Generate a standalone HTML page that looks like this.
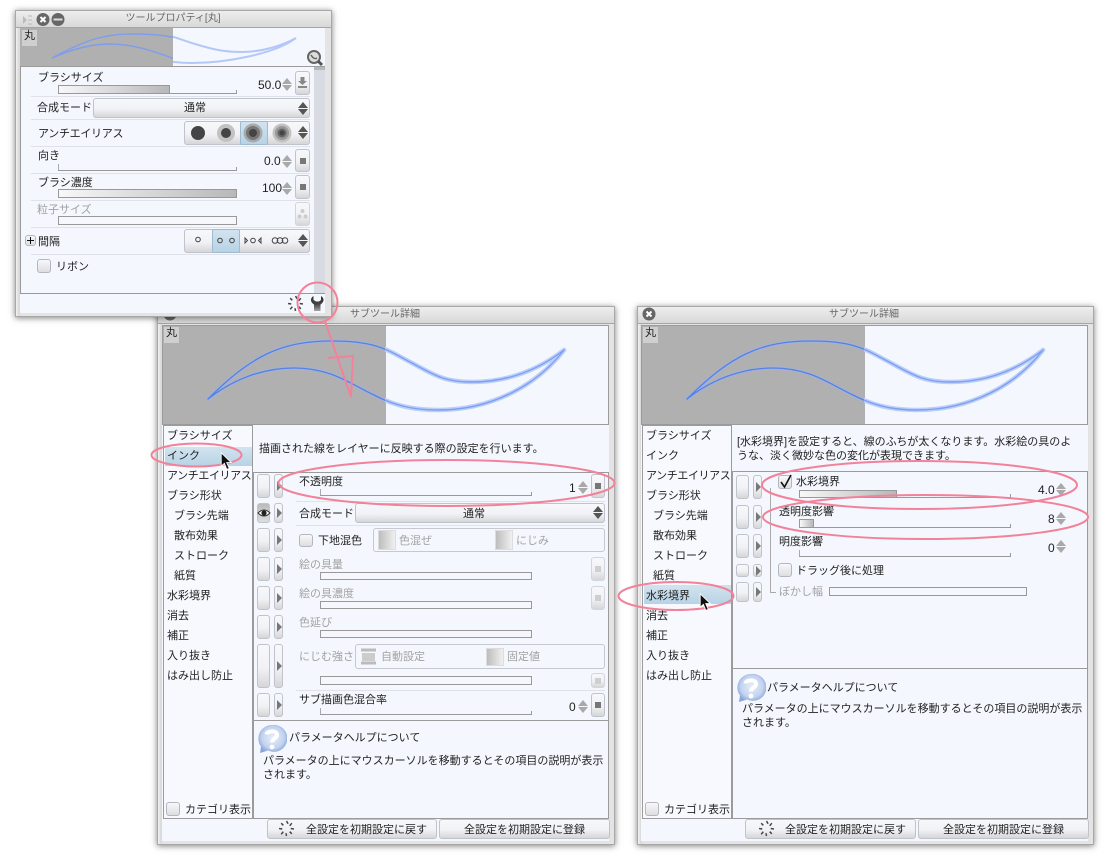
<!DOCTYPE html>
<html lang="ja"><head><meta charset="utf-8"><title>サブツール詳細</title>
<style>
html,body{margin:0;padding:0;background:#fff;}
body{position:relative;width:1109px;height:864px;overflow:hidden;font-family:"Liberation Sans","Noto Sans CJK JP",sans-serif;font-size:11px;color:#222;}
div,span,svg{position:absolute;box-sizing:border-box;}
.win{background:linear-gradient(90deg,#f3f3f3,#d8d8d8 3px,#e4e4e4 5px);border:1px solid #a8a8a8;box-shadow:0 1px 6px rgba(0,0,0,.5);}
.tb{background:linear-gradient(#eee,#d8d8d8);border-bottom:1px solid #a5a5a5;}
.tt{color:#666;text-align:center;line-height:14px;white-space:nowrap;font-size:10px;margin-top:1px;}
.p{background:#f4f7fd;}
.bd{border:1px solid #9b9b9b;}
.ln{background:#dfe2e8;height:1px;}
.ld{background:#999;}
.t{white-space:nowrap;line-height:14px;height:14px;margin-top:1px;}
.n{font-size:12px;}
.lb{background:#cfcfcf;text-align:center;line-height:13px;margin-top:0;width:15px;height:16px;}
.g{color:#a2a2a2;}
.b{background:linear-gradient(#f7f8fb,#f1f2f5 55%,#d6d6d8);border:1px solid #bfc3cb;border-radius:3px;}
.a::after{content:"";position:absolute;left:2px;top:50%;margin-top:-5px;border-left:5px solid #777;border-top:5px solid transparent;border-bottom:5px solid transparent;}
.s::after{content:"";position:absolute;left:50%;top:50%;margin:-3px 0 0 -3px;width:6px;height:6px;background:#777;}
.sd{border-color:#d2d5db;}
.sd::after{background:#cfcfcf;}
.ck{background:linear-gradient(#f8f8fa,#dedee0);border:1px solid #b4b7bd;border-radius:3px;}
.sl{border:1px solid #999;background:#f5f7fc;}
.fl{left:0;top:0;bottom:0;background:linear-gradient(90deg,#f8f8f8,#b8b8b8);}
.tk{border-bottom:1px solid #999;height:7px;}
.tk::before{content:"";position:absolute;left:0;top:0;bottom:0;width:1px;background:#aaa;}
.tk::after{content:"";position:absolute;right:0;bottom:0;height:3px;width:1px;background:#999;}
.sp{width:10px;height:13px;}
.sp::before{content:"";position:absolute;left:0;top:0;border-bottom:6px solid #a9a9a9;border-left:5px solid transparent;border-right:5px solid transparent;}
.sp::after{content:"";position:absolute;left:0;bottom:0;border-top:6px solid #a9a9a9;border-left:5px solid transparent;border-right:5px solid transparent;}
.dk::before{border-bottom-color:#555;}
.dk::after{border-top-color:#555;}
.sel{background:linear-gradient(#d2e3ef,#b7d3e6);}
.ic{background:linear-gradient(90deg,#bdbdbd,#f0f0f0);border:1px solid #ddd;}
.pk{fill:none;stroke:#f2829a;stroke-width:2;}
</style></head><body>
<svg width="0" height="0" style="left:0;top:0"><defs>
<clipPath id="cl"><rect x="0" y="0" width="223" height="99"/></clipPath>
<clipPath id="cr2"><rect x="223" y="0" width="224" height="99"/></clipPath>
<path id="u" d="M46 74C90 30 120 16 170 16C215 16 225 25 250 38C275 52 285 57 310 57C350 57 380 42 402 25"/>
<path id="l" d="M46 74C70 55 100 43 132 43C170 43 190 60 212 70C235 82 255 85 276 85C330 85 375 60 402 25"/>
<symbol id="br" viewBox="0 0 447 99" overflow="visible">
<g fill="none" stroke-linecap="round" clip-path="url(#cl)"><use href="#u" stroke="#9db4ea" stroke-opacity=".6" stroke-width="3.5"/><use href="#l" stroke="#9db4ea" stroke-opacity=".6" stroke-width="3.5"/><use href="#u" stroke="#5580e6" stroke-width="1.3"/><use href="#l" stroke="#5580e6" stroke-width="1.3"/></g>
<g fill="none" stroke-linecap="round" clip-path="url(#cr2)"><use href="#u" stroke="#bccffa" stroke-width="4.5"/><use href="#l" stroke="#bccffa" stroke-width="4.5"/><use href="#u" stroke="#7c9ff2" stroke-width="1.4"/><use href="#l" stroke="#7c9ff2" stroke-width="1.4"/></g></symbol>
<symbol id="hp" viewBox="0 0 30 30"><defs><radialGradient id="hg" cx=".5" cy=".45" r=".55"><stop offset="0" stop-color="#e6eefb"/><stop offset=".7" stop-color="#c3d3ef"/><stop offset="1" stop-color="#89a6d8"/></radialGradient></defs><path fill="url(#hg)" d="M15 1A13.5 13.5 0 0 0 4 22.5L3 29L11 26.5A13.5 13.5 0 1 0 15 1Z"/><path fill="none" stroke="#fff" stroke-width="4" d="M9.5 10.5C10 6.5 20 6 20 11C20 14.5 15 14.5 15 18.5"/><circle cx="15" cy="23" r="2.4" fill="#fff"/></symbol>
<symbol id="rs" viewBox="0 0 16 16"><g fill="none" stroke="#444" stroke-width="1.4"><path d="M8 1L9.5 3.500M13 3L11 5.500M15 8.500L12 8M13 13L11 11M8 15L7.500 12.500M3 13.500L5 11M1 8L4 8.500M3 3L5 5"/></g></symbol>
<symbol id="cr" viewBox="0 0 12 18"><path fill="#111" stroke="#fff" stroke-width=".8" d="M1 0.8L1 13.5L4 10.8L6.3 16.5L8.6 15.5L6.2 10L10.5 10Z"/></symbol>
<linearGradient id="wg" x1="0" y1="0" x2="0" y2="1"><stop offset="0" stop-color="#333"/><stop offset=".55" stop-color="#444"/><stop offset="1" stop-color="#a5a5a5"/></linearGradient>
</defs></svg>

<!-- WINDOW 3 -->
<div class="win" style="left:637px;top:306px;width:457px;height:539px"></div>
<div class="tb" style="left:638px;top:307px;width:455px;height:17px"></div>
<svg style="left:642px;top:307px" width="14" height="14"><circle cx="7" cy="7" r="6.5" fill="#666"/><path d="M4.5 4.5L9.5 9.5M9.5 4.5L4.5 9.5" stroke="#fff" stroke-width="2"/></svg>
<div class="tt" style="left:638px;top:307px;width:452px">サブツール詳細</div>
<div class="p" style="left:641px;top:325px;width:447px;height:516px"></div>
<div class="bd" style="left:641px;top:325px;width:447px;height:100px;background:linear-gradient(90deg,#b0b0b0 223px,#f4f7fd 223px)"></div>
<svg style="left:641px;top:325px" width="447" height="99"><use href="#br" width="447" height="99"/></svg>
<div class="t lb" style="left:643px;top:327px">丸</div>
<div style="left:642px;top:425px;width:90px;height:394px;background:#f7f9fe;border:1px solid #9b9b9b"></div>
<div class="sel" style="left:644px;top:585px;width:87px;height:19px"></div>
<div class="t" style="left:646px;top:428px">ブラシサイズ</div>
<div class="t" style="left:646px;top:448px">インク</div>
<div class="t" style="left:646px;top:468px;letter-spacing:-.4px">アンチエイリアス</div>
<div class="t" style="left:646px;top:488px">ブラシ形状</div>
<div class="t" style="left:653px;top:508px">ブラシ先端</div>
<div class="t" style="left:653px;top:528px">散布効果</div>
<div class="t" style="left:653px;top:548px">ストローク</div>
<div class="t" style="left:653px;top:568px">紙質</div>
<div class="t" style="left:646px;top:588px">水彩境界</div>
<div class="t" style="left:646px;top:608px">消去</div>
<div class="t" style="left:646px;top:628px">補正</div>
<div class="t" style="left:646px;top:648px">入り抜き</div>
<div class="t" style="left:646px;top:668px">はみ出し防止</div>
<div class="ck" style="left:645px;top:802px;width:14px;height:14px"></div>
<div class="t" style="left:664px;top:802px">カテゴリ表示</div>
<div class="t" style="left:737px;top:434px">[水彩境界]を設定すると、線のふちが太くなります。水彩絵の具のよ</div>
<div class="t" style="left:737px;top:448px">うな、淡く微妙な色の変化が表現できます。</div>
<div class="bd" style="left:732px;top:471px;width:356px;height:198px"></div>
<div class="bd" style="left:732px;top:668px;width:356px;height:151px"></div>
<div class="b" style="left:736px;top:475px;width:13px;height:24px"></div><div class="b a" style="left:753px;top:475px;width:9px;height:24px"></div>
<div class="b" style="left:736px;top:505px;width:13px;height:24px"></div><div class="b a" style="left:753px;top:505px;width:9px;height:24px"></div>
<div class="b" style="left:736px;top:534px;width:13px;height:24px"></div><div class="b a" style="left:753px;top:534px;width:9px;height:24px"></div>
<div class="b" style="left:736px;top:564px;width:13px;height:13px"></div><div class="b a" style="left:753px;top:564px;width:9px;height:13px"></div>
<div class="b" style="left:736px;top:582px;width:13px;height:20px"></div><div class="b a" style="left:753px;top:582px;width:9px;height:20px"></div>
<div class="ld" style="left:770px;top:488px;width:1px;height:104px;background:#aaa"></div>
<div style="left:770px;top:592px;width:6px;height:1px;background:#aaa"></div>
<div class="ck" style="left:778px;top:475px;width:14px;height:14px"></div>
<svg style="left:779px;top:473px" width="14" height="16"><path d="M2 9L5.500 14L12 2" fill="none" stroke="#111" stroke-width="1.6"/></svg>
<div class="t" style="left:796px;top:474px">水彩境界</div>
<div class="tk" style="left:799px;top:491px;width:212px"></div>
<div class="sl" style="left:799px;top:490px;width:98px;height:8px;border-bottom-color:#999"><div class="fl" style="width:100%"></div></div>
<div class="t n" style="left:1038px;top:482px">4.0</div><div class="sp" style="left:1056px;top:483px"></div>
<div class="t" style="left:779px;top:504px">透明度影響</div>
<div class="tk" style="left:799px;top:521px;width:212px"></div>
<div class="sl" style="left:799px;top:519px;width:15px;height:9px"><div class="fl" style="width:100%"></div></div>
<div class="t n" style="left:1048px;top:511px">8</div><div class="sp" style="left:1056px;top:512px"></div>
<div class="t" style="left:779px;top:534px">明度影響</div>
<div class="tk" style="left:799px;top:550px;width:212px"></div>
<div class="t n" style="left:1048px;top:540px">0</div><div class="sp" style="left:1056px;top:540px"></div>
<div class="ck" style="left:778px;top:563px;width:14px;height:14px"></div>
<div class="t" style="left:796px;top:563px">ドラッグ後に処理</div>
<div class="t g" style="left:779px;top:584px">ぼかし幅</div>
<div class="sl" style="left:829px;top:587px;width:198px;height:9px"></div>
<svg style="left:736px;top:673px" width="30" height="30"><use href="#hp" width="30" height="30"/></svg>
<div class="t" style="left:767px;top:680px">パラメータヘルプについて</div>
<div class="t" style="left:742px;top:701px">パラメータの上にマウスカーソルを移動するとその項目の説明が表示</div>
<div class="t" style="left:742px;top:715px">されます。</div>
<div class="b" style="left:745px;top:819px;width:171px;height:20px"></div>
<svg style="left:758px;top:820px" width="17" height="17"><use href="#rs" width="17" height="17"/></svg>
<div class="t" style="left:785px;top:822px">全設定を初期設定に戻す</div>
<div class="b" style="left:918px;top:819px;width:171px;height:20px"></div>
<div class="t" style="left:943px;top:822px">全設定を初期設定に登録</div>

<!-- WINDOW 2 -->
<div class="win" style="left:157px;top:306px;width:458px;height:539px"></div>
<div class="tb" style="left:158px;top:307px;width:456px;height:17px"></div>
<svg style="left:163px;top:307px" width="14" height="14"><circle cx="7" cy="7" r="6.5" fill="#666"/></svg>
<div class="tt" style="left:158px;top:307px;width:454px">サブツール詳細</div>
<div class="p" style="left:162px;top:325px;width:447px;height:516px"></div>
<div class="bd" style="left:162px;top:325px;width:447px;height:100px;background:linear-gradient(90deg,#b0b0b0 223px,#f4f7fd 223px)"></div>
<svg style="left:162px;top:325px" width="447" height="99"><use href="#br" width="447" height="99"/></svg>
<div class="t lb" style="left:164px;top:327px">丸</div>
<div style="left:163px;top:425px;width:90px;height:394px;background:#f7f9fe;border:1px solid #9b9b9b"></div>
<div class="sel" style="left:165px;top:447px;width:87px;height:19px"></div>
<div class="t" style="left:167px;top:428px">ブラシサイズ</div>
<div class="t" style="left:167px;top:448px">インク</div>
<div class="t" style="left:167px;top:468px;letter-spacing:-.4px">アンチエイリアス</div>
<div class="t" style="left:167px;top:488px">ブラシ形状</div>
<div class="t" style="left:174px;top:508px">ブラシ先端</div>
<div class="t" style="left:174px;top:528px">散布効果</div>
<div class="t" style="left:174px;top:548px">ストローク</div>
<div class="t" style="left:174px;top:568px">紙質</div>
<div class="t" style="left:167px;top:588px">水彩境界</div>
<div class="t" style="left:167px;top:608px">消去</div>
<div class="t" style="left:167px;top:628px">補正</div>
<div class="t" style="left:167px;top:648px">入り抜き</div>
<div class="t" style="left:167px;top:668px">はみ出し防止</div>
<div class="ck" style="left:166px;top:802px;width:14px;height:14px"></div>
<div class="t" style="left:185px;top:802px">カテゴリ表示</div>
<div class="t" style="left:259px;top:441px">描画された線をレイヤーに反映する際の設定を行います。</div>
<div class="bd" style="left:253px;top:472px;width:356px;height:249px"></div>
<div class="bd" style="left:253px;top:720px;width:356px;height:99px"></div>
<div class="b" style="left:257px;top:474px;width:13px;height:24px"></div><div class="b a" style="left:274px;top:474px;width:9px;height:24px"></div>
<div class="t" style="left:299px;top:474px">不透明度</div>
<div class="tk" style="left:320px;top:489px;width:212px"></div>
<div class="t n" style="left:569px;top:480px">1</div><div class="sp" style="left:578px;top:481px"></div>
<div class="b s" style="left:591px;top:474px;width:14px;height:24px"></div>
<div class="ln" style="left:296px;top:501px;width:309px"></div>
<div class="b" style="left:257px;top:503px;width:13px;height:20px;background:linear-gradient(#bbb,#ddd)"></div><div class="b a" style="left:274px;top:503px;width:9px;height:20px"></div>
<svg style="left:257px;top:507px" width="14" height="12"><path d="M1 6Q7 0 13 6Q7 12 1 6Z" fill="#fff" stroke="#333"/><circle cx="7" cy="6" r="2.6" fill="#222"/></svg>
<div class="t" style="left:299px;top:506px">合成モード</div>
<div class="b" style="left:355px;top:503px;width:250px;height:20px"></div>
<div class="t" style="left:463px;top:506px">通常</div><div class="sp dk" style="left:593px;top:506px"></div>
<div class="ln" style="left:296px;top:525px;width:309px"></div>
<div class="b" style="left:257px;top:528px;width:13px;height:24px"></div><div class="b a" style="left:274px;top:528px;width:9px;height:24px"></div>
<div class="ck" style="left:299px;top:534px;width:14px;height:13px"></div>
<div class="t" style="left:318px;top:533px">下地混色</div>
<div class="bd" style="left:373px;top:528px;width:232px;height:24px;border-radius:3px;border-color:#c5c8ce"></div>
<div class="ic" style="left:378px;top:530px;width:18px;height:20px"></div><div class="t g" style="left:399px;top:533px">色混ぜ</div>
<div class="ic" style="left:495px;top:530px;width:18px;height:20px"></div><div class="t g" style="left:516px;top:533px">にじみ</div>
<div class="b" style="left:257px;top:557px;width:13px;height:24px"></div><div class="b a" style="left:274px;top:557px;width:9px;height:24px"></div>
<div class="t g" style="left:299px;top:557px">絵の具量</div>
<div class="sl" style="left:320px;top:572px;width:212px;height:8px"></div>
<div class="b s sd" style="left:591px;top:557px;width:14px;height:24px"></div>
<div class="b" style="left:257px;top:586px;width:13px;height:24px"></div><div class="b a" style="left:274px;top:586px;width:9px;height:24px"></div>
<div class="t g" style="left:299px;top:586px">絵の具濃度</div>
<div class="sl" style="left:320px;top:601px;width:212px;height:8px"></div>
<div class="b s sd" style="left:591px;top:586px;width:14px;height:24px"></div>
<div class="b" style="left:257px;top:615px;width:13px;height:24px"></div><div class="b a" style="left:274px;top:615px;width:9px;height:24px"></div>
<div class="t g" style="left:299px;top:615px">色延び</div>
<div class="sl" style="left:320px;top:630px;width:212px;height:8px"></div>
<div class="b" style="left:257px;top:644px;width:13px;height:44px"></div><div class="b a" style="left:274px;top:644px;width:9px;height:44px"></div>
<div class="t g" style="left:299px;top:649px">にじむ強さ</div>
<div class="bd" style="left:355px;top:644px;width:250px;height:25px;border-radius:3px;border-color:#c5c8ce"></div>
<svg style="left:360px;top:646px" width="17" height="20"><path d="M1 4H16M1 17H16" stroke="#bbb" stroke-width="3"/><rect x="2" y="7" width="13" height="8" fill="#ccc"/></svg>
<div class="t g" style="left:381px;top:649px">自動設定</div>
<div class="ic" style="left:486px;top:648px;width:18px;height:18px"></div><div class="t g" style="left:507px;top:649px">固定値</div>
<div class="sl" style="left:320px;top:676px;width:212px;height:9px"></div>
<div class="b s sd" style="left:591px;top:673px;width:14px;height:15px"></div>
<div class="ln" style="left:296px;top:690px;width:309px"></div>
<div class="b" style="left:257px;top:693px;width:13px;height:24px"></div><div class="b a" style="left:274px;top:693px;width:9px;height:24px"></div>
<div class="t" style="left:299px;top:692px">サブ描画色混合率</div>
<div class="tk" style="left:320px;top:708px;width:212px"></div>
<div class="t n" style="left:569px;top:699px">0</div><div class="sp" style="left:578px;top:700px"></div>
<div class="b s" style="left:591px;top:693px;width:14px;height:24px"></div>
<svg style="left:257px;top:724px" width="30" height="30"><use href="#hp" width="30" height="30"/></svg>
<div class="t" style="left:289px;top:730px">パラメータヘルプについて</div>
<div class="t" style="left:263px;top:753px">パラメータの上にマウスカーソルを移動するとその項目の説明が表示</div>
<div class="t" style="left:263px;top:767px">されます。</div>
<div class="b" style="left:267px;top:819px;width:170px;height:20px"></div>
<svg style="left:278px;top:820px" width="17" height="17"><use href="#rs" width="17" height="17"/></svg>
<div class="t" style="left:306px;top:822px">全設定を初期設定に戻す</div>
<div class="b" style="left:439px;top:819px;width:171px;height:20px"></div>
<div class="t" style="left:464px;top:822px">全設定を初期設定に登録</div>

<!-- WINDOW 1 -->
<div class="win" style="left:15px;top:10px;width:317px;height:307px"></div>
<div class="tb" style="left:16px;top:11px;width:315px;height:17px"></div>
<svg style="left:22px;top:13px" width="44" height="14"><path d="M1 3L5 7L1 11Z" fill="#bbb"/><path d="M6 3H10M6 7H10M6 11H10" stroke="#bbb"/><circle cx="21" cy="6.500" r="6.500" fill="#666"/><path d="M18.500 4L23.500 9M23.500 4L18.500 9" stroke="#fff" stroke-width="2"/><circle cx="36" cy="6.500" r="6.500" fill="#666"/><path d="M31.500 6.500H40.500" stroke="#ddd" stroke-width="2"/></svg>
<div class="tt" style="left:16px;top:11px;width:314px">ツールプロパティ[丸]</div>
<div class="p" style="left:20px;top:28px;width:305px;height:285px"></div>
<div class="bd" style="left:20px;top:28px;width:305px;height:39px;border-width:0 0 1px;background:linear-gradient(90deg,#b0b0b0 153px,#f4f7fd 153px)"></div>
<svg style="left:20px;top:28px" width="153" height="39"><g fill="none" stroke-width="1.400" stroke="#7f9deb"><path d="M32 30C65 12 85 6 110 6C140 6 155 8 175 16"/><path d="M32 30C50 22 70 16 90 16C115 16 135 24 155 31"/></g></svg>
<svg style="left:173px;top:28px" width="152" height="39"><g fill="none" stroke-width="2" stroke="#b4c8f8"><path d="M-3 8C5 10 15 14 22 16C42 22 52 24 69 24C92 24 112 16 123 10"/><path d="M-18 31C-3 34 7 35 19 35C52 35 102 26 123 10"/></g></svg>
<div class="t lb" style="left:22px;top:30px">丸</div>
<svg style="left:306px;top:49px" width="18" height="18"><circle cx="8" cy="8" r="6" fill="#ddd" stroke="#666" stroke-width="2"/><path d="M12 12L16 16" stroke="#555" stroke-width="3"/><path d="M5 6Q8 11 11 9" stroke="#666" stroke-width="1.500" fill="none"/></svg>
<div style="left:20px;top:67px;width:1px;height:227px;background:#999"></div>
<div style="left:20px;top:293px;width:305px;height:1px;background:#999"></div>
<div style="left:314px;top:67px;width:11px;height:226px;background:#d8dbe2"></div>
<div style="left:314px;top:67px;width:11px;height:3px;background:#b5b7bc"></div>
<div class="t" style="left:38px;top:70px">ブラシサイズ</div>
<div class="tk" style="left:58px;top:87px;width:179px"></div>
<div class="sl" style="left:58px;top:85px;width:112px;height:9px"><div class="fl" style="width:100%"></div></div>
<div class="t n" style="left:258px;top:77px">50.0</div><div class="sp" style="left:282px;top:78px"></div>
<div class="b" style="left:295px;top:71px;width:15px;height:24px"></div>
<svg style="left:297px;top:77px" width="11" height="13"><path d="M3.500 0H7.500V4H10L5.500 8L1 4H3.500Z" fill="#888"/><path d="M1 10H10" stroke="#888" stroke-width="2"/></svg>
<div class="ln" style="left:31px;top:96px;width:279px"></div>
<div class="t" style="left:37px;top:100px">合成モード</div>
<div class="b" style="left:93px;top:98px;width:217px;height:20px"></div>
<div class="t" style="left:184px;top:100px">通常</div><div class="sp dk" style="left:298px;top:102px;"></div>
<div class="ln" style="left:31px;top:119px;width:279px"></div>
<div class="t" style="left:38px;top:126px;letter-spacing:-.3px">アンチエイリアス</div>
<div class="b" style="left:184px;top:121px;width:126px;height:24px"></div>
<div class="sel" style="left:240px;top:121px;width:28px;height:24px;border:1px solid #9fbccf;border-radius:2px"></div>
<svg style="left:184px;top:121px" width="112" height="24"><circle cx="14" cy="12" r="7" fill="#444"/><circle cx="42" cy="12" r="9" fill="#c2c2c2"/><circle cx="42" cy="12" r="5" fill="#444"/><circle cx="69" cy="12" r="9.500" fill="#a9a9a9"/><circle cx="69" cy="12" r="7" fill="#777"/><circle cx="69" cy="12" r="4" fill="#444"/><circle cx="98" cy="12" r="9.500" fill="#c2c2c2"/><circle cx="98" cy="12" r="7" fill="#999"/><circle cx="98" cy="12" r="4.500" fill="#666"/><circle cx="98" cy="12" r="2.500" fill="#444"/></svg>
<div class="sp dk" style="left:298px;top:126px"></div>
<div class="ln" style="left:31px;top:146px;width:279px"></div>
<div class="t" style="left:38px;top:148px">向き</div>
<div class="tk" style="left:58px;top:164px;width:179px"></div>
<div class="t n" style="left:264px;top:153px">0.0</div><div class="sp" style="left:282px;top:155px"></div>
<div class="b s" style="left:295px;top:149px;width:15px;height:23px"></div>
<div class="ln" style="left:31px;top:173px;width:279px"></div>
<div class="t" style="left:38px;top:175px">ブラシ濃度</div>
<div class="sl" style="left:58px;top:189px;width:179px;height:9px"><div class="fl" style="width:100%"></div></div>
<div class="t n" style="left:262px;top:180px">100</div><div class="sp" style="left:282px;top:182px"></div>
<div class="b s" style="left:295px;top:175px;width:15px;height:24px"></div>
<div class="ln" style="left:31px;top:200px;width:279px"></div>
<div class="t g" style="left:37px;top:202px">粒子サイズ</div>
<div class="sl" style="left:58px;top:216px;width:179px;height:9px"></div>
<div class="b sd" style="left:295px;top:202px;width:15px;height:24px"></div>
<svg style="left:297px;top:208px" width="11" height="12"><circle cx="5.500" cy="3" r="2" fill="#ccc"/><circle cx="2.500" cy="8.500" r="2" fill="#ccc"/><circle cx="8.500" cy="8.500" r="2" fill="#ccc"/></svg>
<div class="ln" style="left:31px;top:227px;width:279px"></div>
<div class="ck" style="left:25px;top:235px;width:11px;height:11px"></div>
<svg style="left:25px;top:235px" width="11" height="11"><path d="M2 5.500H9M5.500 2V9" stroke="#111"/></svg>
<div class="t" style="left:38px;top:234px">間隔</div>
<div class="b" style="left:184px;top:229px;width:126px;height:24px"></div>
<div class="sel" style="left:212px;top:229px;width:28px;height:24px;border:1px solid #9fbccf;border-radius:2px"></div>
<svg style="left:184px;top:229px" width="112" height="24" fill="none" stroke="#444"><circle cx="14" cy="10.500" r="2.300"/><circle cx="36" cy="11.500" r="2.300"/><circle cx="48" cy="11.500" r="2.300"/><path d="M61 9V14L63.500 11.500Z"/><circle cx="69" cy="11.500" r="2.300"/><path d="M77 9V14L74.500 11.500Z"/><circle cx="91" cy="11.500" r="2.800"/><circle cx="96" cy="11.500" r="2.800"/><circle cx="101" cy="11.500" r="2.800"/></svg>
<div class="sp dk" style="left:298px;top:234px"></div>
<div class="ln" style="left:31px;top:254px;width:279px"></div>
<div class="ck" style="left:37px;top:259px;width:14px;height:14px"></div>
<div class="t" style="left:56px;top:259px">リボン</div>
<svg style="left:287px;top:295px" width="17" height="17"><use href="#rs" width="17" height="17"/></svg>
<svg style="left:309px;top:295px" width="17" height="17"><path d="M4.500 1C1 3 1 7 5 9.500V16H11.500V9.500C15.500 7 15.500 3 12 1V5L10 6.500H7L4.500 5Z" fill="url(#wg)"/></svg>

<!-- ANNOTATIONS -->
<svg style="left:0;top:0" width="1109" height="864">
<circle class="pk" cx="317.500" cy="302.500" r="20"/>
<path class="pk" d="M325 321L351 397L353 356L328 358"/>
<ellipse class="pk" cx="196.500" cy="455" rx="45" ry="11.500"/>
<ellipse class="pk" cx="446.500" cy="483" rx="168" ry="23"/>
<ellipse class="pk" cx="676" cy="596" rx="57.500" ry="14"/>
<ellipse class="pk" cx="919.500" cy="485" rx="157.500" ry="24"/>
<ellipse class="pk" cx="925.500" cy="517" rx="162.500" ry="22"/>
</svg>
<svg style="left:220px;top:452px" width="13" height="19"><use href="#cr" width="13" height="19"/></svg>
<svg style="left:699px;top:593px" width="13" height="19"><use href="#cr" width="13" height="19"/></svg>
</body></html>
